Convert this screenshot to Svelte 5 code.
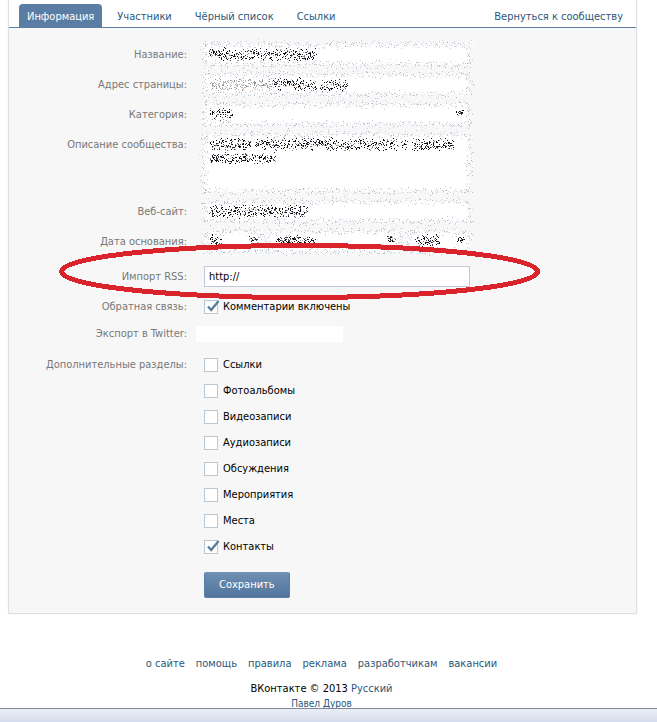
<script lang="ts">
  // Community settings form, "Информация" tab.

  // one scribbled-out piece of text inside a field
  type Run = { from: number; to: number; y: number; spread?: number; faint?: boolean };

  const tabs = ['Информация', 'Участники', 'Чёрный список', 'Ссылки'];

  const footerLinks = ['о сайте', 'помощь', 'правила', 'реклама', 'разработчикам', 'вакансии'];

  let sections = $state([
    { name: 'Ссылки', on: false },
    { name: 'Фотоальбомы', on: false },
    { name: 'Видеозаписи', on: false },
    { name: 'Аудиозаписи', on: false },
    { name: 'Обсуждения', on: false },
    { name: 'Мероприятия', on: false },
    { name: 'Места', on: false },
    { name: 'Контакты', on: true },
  ]);

  let comments = $state(true);
  let rss = $state('http://');

  const INK = ['#0c0c10', '#23252c', '#555a66', '#8f8a86', '#2c3a52', '#b59a7c'];
  const FAINT_INK = ['#8d8f94', '#b4b6ba', '#c9b6a6', '#a5b0bd'];
  const EDGE = ['#c3cad2', '#d5dae0', '#b4bac2', '#ccd5de'];
  const PAD = 5;

  function random(seed: number) {
    let s = seed * 7919 + 17;
    return () => {
      s = (s * 1103515245 + 12345) % 2147483648;
      return s / 2147483648;
    };
  }

  // Returns one path of 1px dots per colour
  function scatter(w: number, h: number, seed: number, runs: Run[]) {
    const next = random(seed);
    const dots: Record<string, string> = {};
    const put = (color: string, x: number, y: number) => {
      dots[color] = (dots[color] ?? '') + `M${Math.round(x + PAD)} ${Math.round(y + PAD)}h1v1h-1z`;
    };
    const pick = (list: string[]) => list[Math.floor(next() * list.length)];
    const jitter = (n: number) => (next() + next() - 1) * n;

    const edge = (x: number, y: number) => {
      put('#ffffff', x + jitter(5), y + jitter(5));
      put('#ffffff', x + jitter(5), y + jitter(5));
      put('#f5f6f8', x + jitter(4), y + jitter(4));
      put('#f1f3f6', x + jitter(4), y + jitter(4));
      if (next() < 0.85) put(pick(EDGE), x + jitter(5), y + jitter(5));
    };
    for (let x = 0; x < w; x++) {
      edge(x, 0);
      edge(x, h - 1);
    }
    for (let y = 0; y < h; y++) {
      edge(0, y);
      edge(w - 1, y);
    }
    for (const run of runs) {
      const ink = run.faint ? FAINT_INK : INK;
      for (let x = run.from; x < run.to; x++) {
        for (let i = 0; i < 5; i++) {
          if (next() < 0.66) put(next() < 0.4 && !run.faint ? INK[0] : pick(ink), x + jitter(2), run.y + jitter(run.spread ?? 7));
        }
      }
    }
    return Object.entries(dots);
  }
</script>

{#snippet noise(w: number, h: number, seed: number, runs: Run[])}
  <svg class="noise" width={w + PAD * 2} height={h + PAD * 2} shape-rendering="crispEdges" aria-hidden="true">
    {#each scatter(w, h, seed, runs) as [color, d]}
      <path fill={color} {d} />
    {/each}
  </svg>
{/snippet}

{#snippet tick()}
  <svg class="tick" width="18" height="16" viewBox="0 0 18 16" aria-hidden="true">
    <path d="M4 8.5L7.2 12L14.6 3" fill="none" stroke="#5a7a9c" stroke-width="2.3" />
  </svg>
{/snippet}

<div class="window">
  <div class="page">
    <main>
      <nav class="tabs">
        {#each tabs as tab, i}
          <a href="#tab{i}" class:active={i === 0}>{tab}</a>
        {/each}
        <a href="#back" class="back">Вернуться к сообществу</a>
      </nav>

      <form onsubmit={(e) => e.preventDefault()}>
        <div class="row">
          <label for="name">Название:</label>
          <div class="field">
            <input id="name" type="text" />
            {@render noise(266, 21, 1, [{ from: 6, to: 111, y: 10 }])}
          </div>
        </div>
        <div class="row">
          <label for="address">Адрес страницы:</label>
          <div class="field">
            <input id="address" type="text" />
            {@render noise(266, 21, 2, [
              { from: 6, to: 70, y: 10, faint: true },
              { from: 70, to: 112, y: 10 },
              { from: 117, to: 144, y: 11 },
            ])}
          </div>
        </div>
        <div class="row">
          <label for="category">Категория:</label>
          <div class="field">
            <select id="category"></select>
            {@render noise(266, 21, 3, [
              { from: 6, to: 28, y: 10 },
              { from: 253, to: 260, y: 8, spread: 5 },
            ])}
          </div>
        </div>
        <div class="row">
          <label for="about">Описание сообщества:</label>
          <div class="field">
            <textarea id="about"></textarea>
            {@render noise(266, 58, 4, [
              { from: 6, to: 47, y: 10 },
              { from: 52, to: 193, y: 10 },
              { from: 198, to: 204, y: 10 },
              { from: 209, to: 250, y: 10 },
              { from: 6, to: 72, y: 24, spread: 6 },
            ])}
          </div>
        </div>
        <div class="row">
          <label for="site">Веб-сайт:</label>
          <div class="field">
            <input id="site" type="text" />
            {@render noise(266, 21, 5, [{ from: 6, to: 103, y: 10 }])}
          </div>
        </div>
        <div class="row">
          <label for="day">Дата основания:</label>
          <div class="dates">
            <div class="field">
              <select id="day" aria-label="День"></select>
              {@render noise(56, 21, 6, [
                { from: 6, to: 17, y: 9 },
                { from: 46, to: 53, y: 8, spread: 3 },
              ])}
            </div>
            <div class="field">
              <select aria-label="Месяц"></select>
              {@render noise(134, 21, 7, [
                { from: 10, to: 48, y: 9, spread: 5 },
                { from: 121, to: 128, y: 8, spread: 4 },
              ])}
            </div>
            <div class="field">
              <select aria-label="Год"></select>
              {@render noise(62, 21, 8, [
                { from: 8, to: 32, y: 9 },
                { from: 50, to: 56, y: 8, spread: 4 },
              ])}
            </div>
          </div>
        </div>
        <div class="row rss">
          <label for="rss">Импорт RSS:</label>
          <div class="field">
            <input id="rss" type="text" bind:value={rss} />
          </div>
          <svg class="marker" width="482" height="58" viewBox="0 0 482 58" aria-hidden="true">
            <ellipse cx="240.5" cy="28.5" rx="238" ry="26" fill="none" stroke="#d9242c" stroke-width="5" shape-rendering="crispEdges" />
          </svg>
        </div>
        <div class="row feedback">
          <span class="caption">Обратная связь:</span>
          <label class="check">
            <input type="checkbox" bind:checked={comments} />
            {#if comments}{@render tick()}{/if}
            Комментарии включены
          </label>
        </div>
        <div class="row twitter">
          <span class="caption">Экспорт в Twitter:</span>
          <div class="blank"></div>
        </div>
        <div class="row sections">
          <span class="caption">Дополнительные разделы:</span>
          <div class="list">
            {#each sections as section}
              <label class="check">
                <input type="checkbox" bind:checked={section.on} />
                {#if section.on}{@render tick()}{/if}
                {section.name}
              </label>
            {/each}
          </div>
        </div>
        <button type="submit">Сохранить</button>
      </form>
    </main>

    <footer>
      <div class="links">
        {#each footerLinks as link}
          <a href="#footer">{link}</a>
        {/each}
      </div>
      <p>ВКонтакте © 2013 <a href="#lang">Русский</a></p>
      <p class="author"><a href="#author">Павел Дуров</a></p>
    </footer>
  </div>
  <div class="statusbar"></div>
</div>

<style>
  :global(body) { background: #fff; }
  .window {
    height: 100vh; display: flex; flex-direction: column; overflow: hidden;
    font-family: "DejaVu Sans Condensed", Tahoma, "Liberation Sans", sans-serif;
    font-size: 11px; line-height: 14px; color: #000;
  }
  .page { flex: 1; min-height: 0; overflow: hidden; }
  a { color: #2b587a; text-decoration: none; }
  main {
    margin: 0 20px 0 8px; border: 1px solid #dae0e6; border-top: 0;
    box-shadow: 0 0 1px #e4e8ec;
  }

  .tabs {
    display: flex; gap: 7px; padding: 4px 5px 0 10px;
    border-bottom: 1px solid #5c7fa4; background: #fff;
  }
  .tabs a { padding: 6px 8px 3px; border-radius: 4px 4px 0 0; white-space: nowrap; }
  .tabs .active { background: #597da3; color: #fff; }
  .tabs .back { margin-left: auto; }

  form { background: #f7f7f7; padding: 16px 0 15px; }
  .row { display: flex; gap: 17px; margin-bottom: 9px; position: relative; }
  .row > label:first-child, .caption {
    width: 178px; flex: none; text-align: right; color: #777; line-height: 22px;
  }
  .field { position: relative; width: 266px; display: flex; }
  .field input, .field select, .field textarea {
    width: 100%; height: 21px; margin: 0; padding: 0 5px; box-sizing: border-box;
    border: 0; border-radius: 0; background: #fff; appearance: none; outline: 0;
    font: inherit; color: #000; resize: none;
  }
  .field textarea { height: 58px; }
  .field #rss { border: 1px solid #c0cad5; padding: 0 4px; }
  .row:has(.field) { align-items: flex-start; }
  .row:has(.field) > label:first-child { margin-bottom: -1px; }
  .noise { position: absolute; left: -5px; top: -5px; pointer-events: none; }

  .dates { display: flex; gap: 7px; }
  .dates .field:nth-child(1) { width: 56px; }
  .dates .field:nth-child(2) { width: 134px; }
  .dates .field:nth-child(3) { width: 62px; }

  .rss { margin-top: 14px; }
  .marker { position: absolute; left: 50px; top: -23px; pointer-events: none; }

  .caption { line-height: 14px; }
  .check { display: flex; align-items: center; gap: 5px; position: relative; height: 14px; }
  .check input {
    appearance: none; width: 14px; height: 14px; margin: 0; box-sizing: border-box;
    border: 1px solid #b9c8d5; background: #fff;
  }
  .tick { position: absolute; left: 0; top: -2px; pointer-events: none; }
  .feedback { margin: 13px 0 12px; }
  .twitter { margin-bottom: 16px; align-items: center; gap: 9px; }
  .blank { width: 147px; height: 16px; background: #fff; }
  .list { display: flex; flex-direction: column; gap: 12px; }
  .sections { margin-bottom: 18px; }

  button {
    display: block; margin-left: 195px; padding: 0 14px; height: 26px;
    border: 1px solid #5b7ea6; border-top-color: #7293b5; border-radius: 2px;
    background: linear-gradient(#6d8fb3, #53759c); color: #fff; font: inherit;
  }

  footer { margin-right: 14px; padding-top: 43px; text-align: center; }
  .links { display: flex; justify-content: center; gap: 11px; }
  p { margin: 11px 0 0; }
  .author { margin: 0; font-size: 10px; line-height: 16px; }

  .statusbar {
    height: 13px; flex: none; border-top: 1px solid #7d8797;
    background: linear-gradient(#eaeef6, #d5dcec);
  }
</style>
